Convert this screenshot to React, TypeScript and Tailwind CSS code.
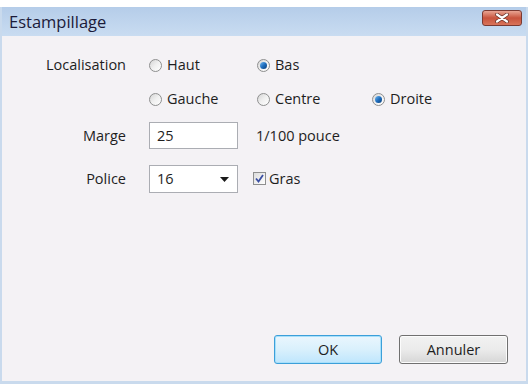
import React from 'react';

const Radio: React.FC<{ checked?: boolean }> = ({ checked }) => (
  <span className="relative inline-flex h-[13px] w-[13px] shrink-0 items-center justify-center rounded-full border border-[#8e8f8f] bg-gradient-to-br from-[#d5d5d5] via-[#f0f0f0] to-white">
    {checked && (
      <span className="h-[7px] w-[7px] rounded-full bg-gradient-to-br from-[#6fb8ef] via-[#1f6fbf] to-[#0b3d78]" />
    )}
  </span>
);

const Option: React.FC<{ label: string; checked?: boolean }> = ({ label, checked }) => (
  <label className="flex items-center gap-[5px]">
    <Radio checked={checked} />
    <span>{label}</span>
  </label>
);

const App: React.FC = () => {
  return (
    <div
      className="flex h-[384px] w-[528px] flex-col bg-white text-[14.5px] text-[#1e1e1e]"
      style={{ fontFamily: '"Open Sans", "Noto Sans", sans-serif' }}
    >
      <div className="mt-[7px] flex flex-1 flex-col border-x-[2px] border-b-[3px] border-[#c9daed]">
        {/* Title bar */}
        <div className="flex h-[29px] items-start justify-between bg-gradient-to-b from-[#b5cde9] to-[#c9dcf1] pl-[7px] pr-[4px]">
          <span className="mt-[2px] text-[16.5px] leading-[25px] text-[#1b1b3a]">Estampillage</span>
          <button className="mt-[3px] flex h-[16px] w-[40px] items-center justify-center rounded-[3px] border border-[#7a3a32] bg-gradient-to-b from-[#e8a493] via-[#c7533d] to-[#d9745a]">
            <svg width="14" height="10" viewBox="0 0 14 10">
              <path d="M2 1.5 L12 8.5 M12 1.5 L2 8.5" stroke="#5a2a22" strokeWidth="3.6" strokeLinecap="round" />
              <path d="M2 1.5 L12 8.5 M12 1.5 L2 8.5" stroke="#ffffff" strokeWidth="2.2" strokeLinecap="round" />
            </svg>
          </button>
        </div>

        {/* Content */}
        <div className="flex flex-1 flex-col bg-[#f4f2f5] pl-[22px] pr-[10px] pt-[16px]">
          <div className="grid grid-cols-[102px_1fr] gap-x-[23px]">
            <div className="flex h-[26px] items-center justify-end">Localisation</div>
            <div className="grid h-[26px] grid-cols-[108px_115px_1fr] items-center">
              <Option label="Haut" />
              <Option label="Bas" checked />
            </div>

            <div className="mt-[8px] h-[26px]" />
            <div className="mt-[8px] grid h-[26px] grid-cols-[108px_115px_1fr] items-center">
              <Option label="Gauche" />
              <Option label="Centre" />
              <Option label="Droite" checked />
            </div>

            <div className="mt-[10px] flex h-[27px] items-center justify-end">Marge</div>
            <div className="mt-[10px] flex items-center gap-[18px]">
              <div className="flex h-[27px] w-[89px] items-center border border-[#abadb3] bg-white px-[7px]">25</div>
              <span>1/100 pouce</span>
            </div>

            <div className="mt-[16px] flex h-[28px] items-center justify-end">Police</div>
            <div className="mt-[16px] flex items-center gap-[15px]">
              <div className="flex h-[28px] w-[89px] items-center justify-between border border-[#abadb3] bg-white pl-[7px] pr-[8px]">
                <span>16</span>
                <svg width="9" height="5" viewBox="0 0 9 5">
                  <path d="M0 0 H9 L4.5 5 Z" fill="#1a1a1a" />
                </svg>
              </div>
              <label className="flex items-center gap-[3px] self-start pt-[3px]">
                <span className="flex h-[13px] w-[13px] items-center justify-center border border-[#8e8f8f] bg-gradient-to-br from-[#dcdcdc] to-white">
                  <svg width="9" height="9" viewBox="0 0 9 9">
                    <path d="M1 4.5 L3.5 7.5 L8 1" stroke="#3b4fa3" strokeWidth="1.8" fill="none" />
                  </svg>
                </span>
                <span>Gras</span>
              </label>
            </div>
          </div>

          <div className="mt-auto mb-[17px] flex justify-end gap-[17px] pr-[8px]">
            <button className="h-[29px] w-[108px] rounded-[3px] border border-[#3c9fd9] bg-gradient-to-b from-[#eaf6fd] via-[#d9f0fc] to-[#bee6fd] shadow-[inset_0_0_0_1px_#a7e0fb]">
              OK
            </button>
            <button className="h-[29px] w-[109px] rounded-[3px] border border-[#707070] bg-gradient-to-b from-[#f2f2f2] via-[#ebebeb] to-[#d6d6d6] shadow-[inset_0_0_0_1px_#fcfcfc]">
              Annuler
            </button>
          </div>
        </div>
      </div>
    </div>
  );
};

export default App;
